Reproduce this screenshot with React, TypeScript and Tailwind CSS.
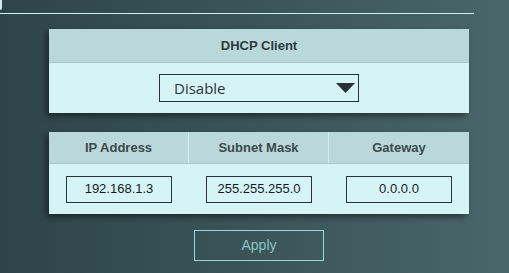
export default function App() {
  const cols = [
    { label: "IP Address", value: "192.168.1.3" },
    { label: "Subnet Mask", value: "255.255.255.0" },
    { label: "Gateway", value: "0.0.0.0" },
  ];

  return (
    <div className="w-[509px] h-[273px] overflow-hidden bg-gradient-to-r from-[#2d4549] via-[#3a5458] to-[#4b666a] font-['Liberation_Sans',Arial,sans-serif]">
      {/* top edge */}
      <div className="h-[10px] w-[2px] bg-[#cfe9ea] rounded-br-sm" />
      <div className="mt-[3px] h-px w-[474px] bg-[#cdeff1]" />

      {/* DHCP panel */}
      <div className="ml-[49px] mt-[15px] w-[420px] shadow-[-3px_3px_6px_rgba(0,0,0,0.45)]">
        <div className="h-[34px] flex items-center justify-center bg-[#bad8da] border-b border-[#a9c7c9] text-[13px] font-bold text-[#2f3b3e]">
          DHCP Client
        </div>
        <div className="h-[50px] flex items-center justify-center bg-[#d6f4f6]">
          <div className="w-[200px] h-[28px] border border-[#263538] flex items-center justify-between pl-[14px] pr-[3px]">
            <span className="text-[15px] text-[#2b3639] font-['Open_Sans',sans-serif]">Disable</span>
            <svg width="19" height="11" viewBox="0 0 19 11">
              <path d="M0 0 H19 L9.5 10 Z" fill="#263235" />
            </svg>
          </div>
        </div>
      </div>

      {/* IP panel */}
      <div className="ml-[49px] mt-[19px] w-[420px] shadow-[-3px_3px_6px_rgba(0,0,0,0.45)]">
        <div className="h-[32px] grid grid-cols-3 bg-[#bad8da] border-b border-[#a9c7c9]">
          {cols.map((c, i) => (
            <div
              key={c.label}
              className={`flex items-center justify-center text-[13px] font-bold text-[#3a4a4d] ${i < 2 ? "border-r border-[#d2eced]" : ""}`}
            >
              {c.label}
            </div>
          ))}
        </div>
        <div className="h-[50px] grid grid-cols-3 bg-[#d6f4f6]">
          {cols.map((c) => (
            <div key={c.label} className="flex items-center justify-center">
              <div className="w-[106px] h-[27px] border border-[#263538] flex items-center justify-center text-[13px] text-[#151c1e]">
                {c.value}
              </div>
            </div>
          ))}
        </div>
      </div>

      {/* Apply */}
      <div className="flex justify-center ml-[49px] w-[420px] mt-[16px]">
        <button className="w-[130px] h-[31px] border border-[#9ed4d7] text-[14px] text-[#8cc2c5] flex items-center justify-center">
          Apply
        </button>
      </div>
    </div>
  );
}
